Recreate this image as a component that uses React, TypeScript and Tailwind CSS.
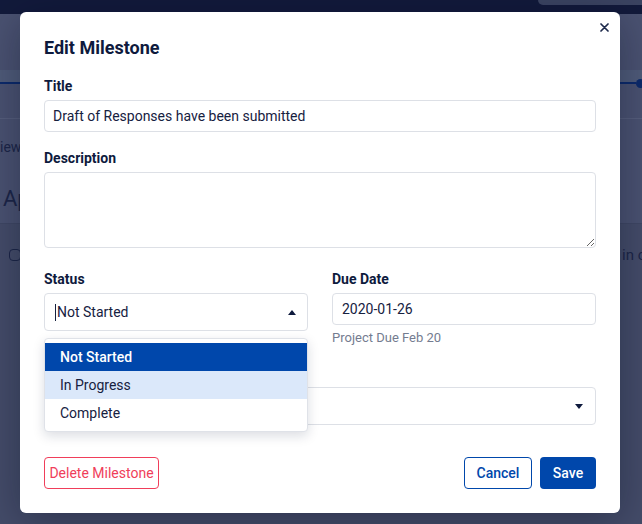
import { type ReactNode } from 'react'

const ink = 'text-[#0e1a3d]'

function Label({ children }: { children: ReactNode }) {
  return <label className={`mb-1 block text-sm font-bold leading-5 ${ink}`}>{children}</label>
}

function Caret({ up = false }: { up?: boolean }) {
  return (
    <svg width="8" height="5" viewBox="0 0 8 5" className="shrink-0 text-[#0e1a3d]">
      <path d={up ? 'M0 5 L4 0 L8 5 Z' : 'M0 0 L8 0 L4 5 Z'} fill="currentColor" />
    </svg>
  )
}

/** The dimmed page that sits behind the dialog. */
function BackdropPage() {
  return (
    <div className="flex flex-col">
      <div className="flex h-[14px] justify-end bg-[#121a3b]">
        <div className="h-[5px] w-[104px] rounded-bl-md bg-[#3b4462]" />
      </div>
      <div className="h-[56px]" />
      <div className="h-[12px] bg-[#4f5b79]" />
      <div className="flex h-[2px] items-center">
        <div className="h-[2px] flex-1 bg-[#0c2a6b]" />
        <div className="-mr-[3px] h-[9px] w-[9px] shrink-0 rounded-full bg-[#0c2a6b]" />
      </div>
      <div className="h-[34px]" />
      <div className="h-px bg-[#565e7c]" />
      <div className="h-[18px]" />
      <div className="text-sm leading-5 text-[#1c2648]">iew</div>
      <div className="h-[28px]" />
      <div className="pl-[3px] text-[22px] leading-7 text-[#1c2648]">Ap</div>
      <div className="h-[10px]" />
      <div className="h-px bg-[#3f4764]" />
      <div className="flex h-[300px] flex-col bg-[#444c69]">
        <div className="mt-[21px] flex items-center">
          <div className="ml-[9px] h-[12px] w-[12px] rounded-sm border border-[#1c2648]" />
          <div className="flex-1" />
          <span className="w-[20px] overflow-hidden whitespace-nowrap text-[15px] leading-5 text-[#1c2648]">
            in calendar
          </span>
        </div>
      </div>
    </div>
  )
}

export default function App() {
  return (
    <div className="relative h-[524px] w-full overflow-hidden bg-[#4a5271] font-['Roboto',sans-serif]">
      <BackdropPage />

      <div className="absolute left-[20px] top-[12px] w-[600px] rounded-md bg-white px-6 pb-6 pt-[23px] shadow-[0_8px_40px_rgba(5,10,30,0.35)]">
        <button className="absolute right-[11px] top-[11px] text-[#1e2a4c]" aria-label="Close">
          <svg width="9" height="9" viewBox="0 0 9 9">
            <path d="M1 1 L8 8 M8 1 L1 8" stroke="currentColor" strokeWidth="1.7" strokeLinecap="round" />
          </svg>
        </button>

        <h2 className={`text-[18px] font-bold leading-[26px] ${ink}`}>Edit Milestone</h2>

        <div className="mt-[15px]">
          <Label>Title</Label>
          <div className="flex h-8 items-center rounded border border-[#dde0e6] px-2 text-sm text-[#16213f]">
            Draft of Responses have been submitted
          </div>
        </div>

        <div className="mt-4">
          <Label>Description</Label>
          <textarea className="block h-[76px] w-full rounded border border-[#dde0e6] px-2 py-1 text-sm outline-none" />
        </div>

        <div className="mt-[21px] grid grid-cols-2 gap-6">
          <div>
            <Label>Status</Label>
            <div className="relative">
              <div className="flex h-[38px] items-center justify-between rounded border border-[#dde0e6] pl-[10px] pr-[11px] text-sm text-[#16213f]">
                <span className="flex items-center">
                  <span className="h-[17px] w-px bg-[#16213f]" />
                  <span className="pl-px">Not Started</span>
                </span>
                <Caret up />
              </div>
              <div className="absolute left-0 right-0 top-full z-10 mt-[7px] rounded border border-[#dfe2e8] bg-white py-1 text-sm shadow-[0_4px_12px_rgba(15,25,60,0.15)]">
                <div className="flex h-7 items-center bg-[#0047ab] pl-[15px] font-medium text-white">Not Started</div>
                <div className="flex h-7 items-center bg-[#dbe8fa] pl-[15px] text-[#16213f]">In Progress</div>
                <div className="flex h-7 items-center pl-[15px] text-[#16213f]">Complete</div>
              </div>
            </div>
          </div>
          <div>
            <Label>Due Date</Label>
            <div className="flex h-8 items-center rounded border border-[#dde0e6] px-[9px] text-sm text-[#16213f]">
              2020-01-26
            </div>
            <p className="mt-1 text-[13px] leading-[18px] text-[#747c90]">Project Due Feb 20</p>
          </div>
        </div>

        <div className="mt-4">
          {/* label of this field sits under the open status menu */}
          <div className="mb-1 h-5" />
          <div className="flex h-[38px] items-center justify-end rounded border border-[#dde0e6] pr-[12px]">
            <Caret />
          </div>
        </div>

        <div className="mt-8 flex items-center justify-between">
          <button className="h-8 w-[115px] rounded border border-[#f03e5a] text-sm text-[#f03e5a]">
            Delete Milestone
          </button>
          <div className="flex gap-2">
            <button className="h-8 w-[68px] rounded border border-[#0047ab] text-sm font-medium text-[#0047ab]">
              Cancel
            </button>
            <button className="h-8 w-[56px] rounded bg-[#0047ab] text-sm font-medium text-white">Save</button>
          </div>
        </div>
      </div>
    </div>
  )
}
